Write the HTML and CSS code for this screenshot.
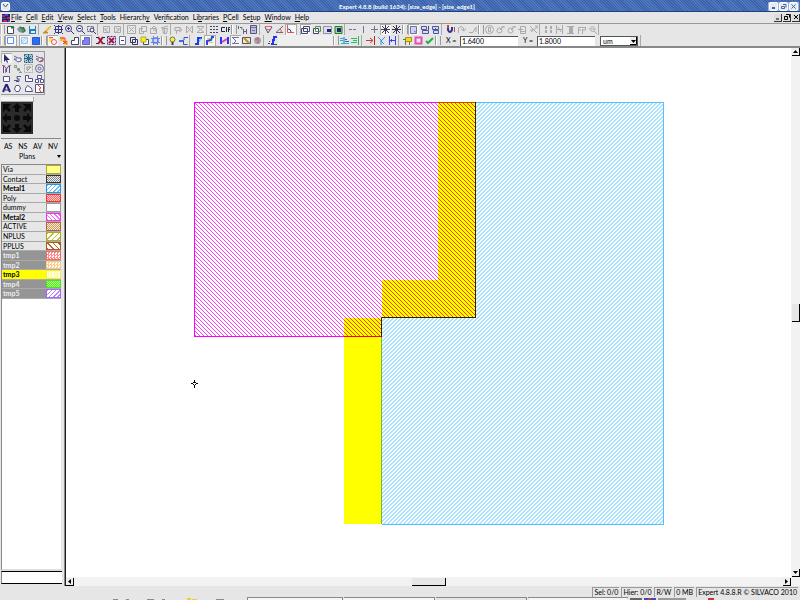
FILE: index.html
```html
<!DOCTYPE html>
<html lang="en">
<head>
<meta charset="utf-8">
<title>Expert 4.8.8</title>
<link rel="stylesheet" href="styles.css">
</head>
<body>
<svg class="defs" aria-hidden="true">
  <symbol id="new" viewBox="0 0 9 9"><path d="M1.5 1.5h4l2 2v5h-6z" fill="#fff" stroke="#334"/><path d="M5 3l2-2 1 2z" fill="#080" stroke="#063"/></symbol>
  <symbol id="open" viewBox="0 0 9 9"><path d="M0 4l3-3 3 2v5l-4-1z" fill="#789"/><path d="M3 2l4 0 2 4-3 2z" fill="#364"/><path d="M4 4l3 2" stroke="#3c3"/></symbol>
  <symbol id="save" viewBox="0 0 9 9"><path d="M1 1h7v8H1z" fill="#17a"/><path d="M2 1h5v3H2zM3 6h4v2H3z" fill="#def"/></symbol>
  <symbol id="pencil" viewBox="0 0 9 9"><path d="M2 7l5-5" stroke="#eb2" stroke-width="2"/><path d="M0 8h5l-2-2zM7 1l1 1" fill="#a84" stroke="#b82"/></symbol>
  <symbol id="fit" viewBox="0 0 9 9"><path d="M1.500 1.500h6v6h-6zM0 4.500h9M4.500 0v9" fill="none" stroke="#227"/><path d="M0 0h1v1H0zM8 0h1v1H8zM0 8h1v1H0zM8 8h1v1H8z" fill="#227"/></symbol>
  <symbol id="zin" viewBox="0 0 9 9"><circle cx="3.500" cy="3.500" r="3" fill="#eef" stroke="#226"/><path d="M6 6l3 3M2 3.500h3M3.500 2v3" stroke="#226"/></symbol>
  <symbol id="zout" viewBox="0 0 9 9"><circle cx="3.500" cy="3.500" r="3" fill="#eef" stroke="#226"/><path d="M6 6l3 3M2 3.500h3" stroke="#226"/></symbol>
  <symbol id="zbox" viewBox="0 0 9 9"><path d="M.5 1.500h6v5h-6z" fill="none" stroke="#557" stroke-dasharray="2 1"/><circle cx="5" cy="5" r="2" fill="#eef" stroke="#226"/><path d="M6 6l3 3" stroke="#226"/></symbol>
  <symbol id="undo" viewBox="0 0 9 9"><path d="M1.500 1.500h6v6h-6zM6 3L3 5l3 2M3 5V3" fill="none" stroke="currentColor"/></symbol>
  <symbol id="redo" viewBox="0 0 9 9"><path d="M1.500 1.500h6v6h-6zM3 3l3 2-3 2M6 5V3" fill="none" stroke="currentColor"/></symbol>
  <symbol id="cut" viewBox="0 0 9 9"><path d="M.5 .5h8v8h-8zM2 2l5 5M7 2L2 7" fill="none" stroke="currentColor"/></symbol>
  <symbol id="copy" viewBox="0 0 9 9"><path d="M3.500 1.500h5v5h-5zM5 3.500H1.500v5h4V6" fill="none" stroke="currentColor"/></symbol>
  <symbol id="paste" viewBox="0 0 9 9"><path d="M1.500 3.500h6v5h-6zM3 3l2-2 2 2M4 5h3v2" fill="none" stroke="currentColor"/></symbol>
  <symbol id="del" viewBox="0 0 9 9"><path d="M2.500 3.500h5l-1 5h-3zM1 3l7-2M4.500 4v4" fill="none" stroke="currentColor"/></symbol>
  <symbol id="rot" viewBox="0 0 9 9"><path d="M1 2.500h5v3H1zM2.500 6v3M6 3l2 2-3 2" fill="none" stroke="currentColor"/></symbol>
  <symbol id="flip" viewBox="0 0 9 9"><path d="M1.500 1v7l3-3.500zM7.500 1v7l-3-3.500z" fill="none" stroke="currentColor"/></symbol>
  <symbol id="hour" viewBox="0 0 9 9"><path d="M1 1.500h7l-3.500 3zM1 7.500h7l-3.500-3z" fill="none" stroke="currentColor"/></symbol>
  <symbol id="dots" viewBox="0 0 9 9"><path d="M0 1.500h9M0 4.500h9M0 7.500h9" stroke="#336" stroke-dasharray="2 1"/></symbol>
  <symbol id="cif" viewBox="0 0 9 9"><path d="M4 2.500H.5v4H4M5.500 2v5M9 2.500H7.500V7M7 4.500h2" fill="none" stroke="#113"/></symbol>
  <symbol id="half" viewBox="0 0 9 9"><path d="M.5 1v3M2 2.500h2v2M5.500 4v5M8.500 4v5M5 6.500h3" fill="none" stroke="#557"/></symbol>
  <symbol id="calc" viewBox="0 0 9 9"><path d="M1.500 .5h6v8h-6z" fill="#bbd" stroke="#447"/><path d="M2 2.500h5M3 5.500h3" stroke="#669"/></symbol>
  <symbol id="ang1" viewBox="0 0 9 9"><path d="M1 2l3 6 4-6" fill="none" stroke="#446"/><path d="M1 1.500h7M3 4.500h3" stroke="#e55"/></symbol>
  <symbol id="ang2" viewBox="0 0 9 9"><path d="M8 1L1 7.500h7" fill="none" stroke="#557"/><path d="M5 4q2 1 1 4" fill="none" stroke="#e33"/></symbol>
  <symbol id="ang3" viewBox="0 0 9 9"><path d="M1.500 0v7.500H8" fill="none" stroke="#d44"/><path d="M2 4q3 0 3 3" fill="none" stroke="#337"/></symbol>
  <symbol id="ov" viewBox="0 0 9 9"><path d="M.5 3.500h6v5h-6zM2.500 1.500h6v5h-6z" fill="none" stroke="currentColor"/></symbol>
  <symbol id="ovg" viewBox="0 0 9 9"><path d="M1.500 3.500h5v5h-5z" fill="#fff" stroke="#336"/><path d="M3.500 1.500h5v5h-5z" fill="none" stroke="#484"/></symbol>
  <symbol id="sqin" viewBox="0 0 9 9"><path d="M.5 1.500h8v7h-8z" fill="#dde" stroke="#88a"/><path d="M4 4h4v3H4z" fill="#116"/></symbol>
  <symbol id="sqg" viewBox="0 0 9 9"><path d="M1 1.500h7v7H1z" fill="#8d8" stroke="#171"/><path d="M3 3h4v4H3z" fill="#116"/></symbol>
  <symbol id="dash" viewBox="0 0 9 9"><path d="M1 4.500h3M5 4.500h3" stroke="#668"/></symbol>
  <symbol id="bar" viewBox="0 0 9 9"><path d="M4.500 1v7" stroke="#668"/></symbol>
  <symbol id="plus" viewBox="0 0 9 9"><path d="M4.500 1v7M1 4.500h7" stroke="#668"/></symbol>
  <symbol id="star" viewBox="0 0 9 9"><path d="M4.500 0v9M0 4.500h9M1 1l7 7M8 1L1 8" stroke="#224"/></symbol>
  <symbol id="win" viewBox="0 0 9 9"><path d="M1.500 1.500h6v7h-6z" fill="#ccf" stroke="#668"/><path d="M1 1.500h5M8 8L5 6" stroke="#66a"/></symbol>
  <symbol id="stack" viewBox="0 0 9 9"><path d="M1.500 1.500h5v3h-5zM2.500 5.500h6v3h-6z" fill="#dde" stroke="#449"/><path d="M8.500 1v4" stroke="#338"/></symbol>
  <symbol id="stack2" viewBox="0 0 9 9"><path d="M1.500 1.500h6v3h-6zM2.500 5.500h5v3h-5z" fill="#cdf" stroke="#449"/><path d="M4 3l4 4" stroke="#258"/></symbol>
  <symbol id="mag" viewBox="0 0 9 9"><path d="M2 1v4q2 4 4 0V2" fill="none" stroke="#228" stroke-width="2"/><path d="M1 0h2v3H1z" fill="#e22"/><path d="M8.500 2v5" stroke="#a44"/></symbol>
  <symbol id="turn" viewBox="0 0 9 9"><path d="M1.500 8V3q3-3 5 0v2M4 4l3 2 2-3" fill="none" stroke="currentColor"/></symbol>
  <symbol id="slope" viewBox="0 0 9 9"><path d="M1 7.500h4M5 7l3-5v5" fill="none" stroke="currentColor"/></symbol>
  <symbol id="ring" viewBox="0 0 9 9"><circle cx="4.500" cy="4.500" r="4" fill="none" stroke="currentColor"/><path d="M3.500 2.500h2v4h-2z" fill="none" stroke="currentColor"/></symbol>
  <symbol id="key" viewBox="0 0 9 9"><circle cx="3.500" cy="5.500" r="2.500" fill="none" stroke="currentColor"/><path d="M4 5l4-4M5 2h4" stroke="currentColor"/></symbol>
  <symbol id="form" viewBox="0 0 9 9"><path d="M2.500 1.500h5v7h-5zM0 4.500h5M3 6.500h4" fill="none" stroke="currentColor"/></symbol>
  <symbol id="scis" viewBox="0 0 9 9"><path d="M1 1l7 7M8 2L2 7M1 5h3M6 1h3v3" fill="none" stroke="currentColor"/></symbol>
  <symbol id="arr" viewBox="0 0 9 9"><path d="M2 1v3M7 1v3M2 5v3M7 5v3" stroke="currentColor" stroke-width="2"/></symbol>
  <symbol id="aln" viewBox="0 0 9 9"><path d="M1.500 0v9M7.500 0v9M2 4.500h5M3 2l3 5" fill="none" stroke="currentColor"/></symbol>
  <symbol id="col" viewBox="0 0 9 9"><path d="M3 2h4v6H3z" fill="currentColor"/><path d="M1 1.500h7M1 8.500h7" stroke="currentColor"/></symbol>
  <symbol id="ff" viewBox="0 0 9 9"><path d="M1.500 9V2.500H5M1 5h3M5.500 9V4M5 2.500h4M8.500 2v3H6" fill="none" stroke="currentColor"/></symbol>
  <symbol id="zg" viewBox="0 0 9 9"><path d="M4.500 1l3 3-3 3-3-3zM6 6l3 3M3 4h3" fill="none" stroke="currentColor"/></symbol>
  <symbol id="bsq" viewBox="0 0 9 9"><path d="M1.500 1.500h6v6h-6z" fill="#fff" stroke="#48f"/></symbol>
  <symbol id="bhat" viewBox="0 0 9 9"><path d="M1.500 1.500h6v6h-6z" fill="#eff6ff" stroke="#9bd"/><path d="M2 5l3-3M2 7l5-5M5 7l2-2" stroke="#8cf"/></symbol>
  <symbol id="bfull" viewBox="0 0 9 9"><path d="M1.500 1.500h7v7h-7z" fill="#16e" stroke="#24c"/></symbol>
  <symbol id="ro" viewBox="0 0 9 9"><path d="M1 1h4v5H1z" fill="#fd4"/><path d="M1 1.500h4" stroke="#e44"/><circle cx="6" cy="6" r="2.500" fill="#fff" stroke="#e44"/></symbol>
  <symbol id="rx" viewBox="0 0 9 9"><path d="M1 1h4v4H1zM5 5h4v4H5z" fill="#fb2"/><path d="M1 2h5v4M4 5l4 3M8 5L4 8" fill="none" stroke="#e22"/></symbol>
  <symbol id="lsh" viewBox="0 0 9 9"><path d="M1.500 8.500v-4h3v-3h4v7z" fill="#fff" stroke="#336"/></symbol>
  <symbol id="lfill" viewBox="0 0 9 9"><path d="M1.500 8.500v-4h2v-3h5v7z" fill="#77e" stroke="#55c"/></symbol>
  <symbol id="xr" viewBox="0 0 9 9"><path d="M2 1l5 7M7 1L2 8" stroke="#a02" stroke-width="2"/><path d="M0 1.500h2M7 1.500h2M0 7.500h2M7 7.500h2M4 4.500h1" stroke="#116"/></symbol>
  <symbol id="xb" viewBox="0 0 9 9"><path d="M.5 .5h8v8h-8z" fill="#dde" stroke="#228" stroke-dasharray="2 1"/><path d="M2 2l5 5M7 2L2 7" stroke="#a02" stroke-width="2"/></symbol>
  <symbol id="page" viewBox="0 0 9 9"><path d="M1.500 .5h6v8h-6z" fill="#fff" stroke="#669"/><path d="M3 4.500h3" stroke="#336"/></symbol>
  <symbol id="dup" viewBox="0 0 9 9"><path d="M1.500 1.500h5v5h-5zM3.500 3.500h5v5h-5z" fill="#eef" stroke="#225"/></symbol>
  <symbol id="ydup" viewBox="0 0 9 9"><path d="M3.500 3.500h5v5h-5z" fill="#fff" stroke="#336"/><path d="M1 1h5v5H1z" fill="#fe0" stroke="#aa2"/></symbol>
  <symbol id="chip" viewBox="0 0 9 9"><path d="M2 2h5v5H2z" fill="#cdf" stroke="#44e"/><path d="M2.500 0v9M6.500 0v9M0 2.500h9M0 6.500h9" stroke="#57e"/></symbol>
  <symbol id="bulb" viewBox="0 0 9 9"><circle cx="4.500" cy="3.500" r="2.500" fill="#fe3" stroke="#664"/><path d="M4.500 6v3" stroke="#333" stroke-width="2"/></symbol>
  <symbol id="link" viewBox="0 0 9 9"><path d="M0 4h5v2H0z" fill="#26e"/><path d="M5 4V1.500h4M4.500 5v3.500h4" fill="none" stroke="#24b"/></symbol>
  <symbol id="zig" viewBox="0 0 9 9"><path d="M1 8h3V2h4" fill="none" stroke="#12e" stroke-width="2"/><path d="M5 6l2-4" stroke="#0cc"/></symbol>
  <symbol id="zigy" viewBox="0 0 9 9"><path d="M2 9V5l4-1 1-3h2" fill="none" stroke="#13d" stroke-width="2"/><path d="M2 2.500h4M4 6.500h4" stroke="#cc3"/></symbol>
  <symbol id="hh" viewBox="0 0 9 9"><path d="M1 1v7M8 1v7" stroke="#12f" stroke-width="2"/><path d="M2 6l5-3" stroke="#e2a" stroke-width="2"/></symbol>
  <symbol id="sum" viewBox="0 0 9 9"><path d="M1 1.500h7M2 2l3 3-3 3M1 7.500h7" fill="none" stroke="#669"/></symbol>
  <symbol id="eye" viewBox="0 0 9 9"><path d="M.5 1.500h8v6h-8z" fill="#eec" stroke="#446"/><path d="M2 2l5 5" stroke="#b80" stroke-width="2"/></symbol>
  <symbol id="bug" viewBox="0 0 9 9"><circle cx="4.500" cy="4.500" r="3.500" fill="#99a"/><path d="M5 1v7M2 3h3" stroke="#c55"/></symbol>
  <symbol id="step" viewBox="0 0 9 9"><path d="M3 8h2V4h1V1h3" fill="none" stroke="#12e" stroke-width="2"/><path d="M0 7.500h2M6 8.500h3M1 5.500h1" stroke="#336"/></symbol>
  <symbol id="cyl" viewBox="0 0 9 9"><path d="M0 2.500h3M0 4.500h3M1 7.500h8" stroke="#0bb"/><path d="M4 1v6M5 5.500h4M5 3.500h2" fill="none" stroke="#25c"/></symbol>
  <symbol id="grn" viewBox="0 0 9 9"><path d="M0 2.500h6M0 6.500h6M2 4.500h4" stroke="#1b5"/><path d="M7.500 0v9" stroke="#2a4"/></symbol>
  <symbol id="rarr" viewBox="0 0 9 9"><path d="M0 4.500h6M4 2l3 2.500L4 7" fill="none" stroke="#c22"/><path d="M8.500 0v9" stroke="#a11"/></symbol>
  <symbol id="kk" viewBox="0 0 9 9"><path d="M1 1l3 3v5M8 1L4 5l3 3" fill="none" stroke="#28e"/></symbol>
  <symbol id="hb" viewBox="0 0 9 9"><path d="M1.500 0v9M7.500 0v9M2 4.500h5M3.500 3v3" stroke="#23e"/></symbol>
  <symbol id="flag" viewBox="0 0 9 9"><path d="M2.500 1.500h6v4h-6z" fill="#ed0" stroke="#a80"/><path d="M2.500 5v4M6.500 6v3M0 3.500h3" stroke="#663"/></symbol>
  <symbol id="psq" viewBox="0 0 9 9"><path d="M1.500 1.500h6v6h-6z" fill="#fdf" stroke="#d4a" stroke-width="2"/></symbol>
  <symbol id="ok" viewBox="0 0 9 9"><path d="M1 5l2 2 5-5" fill="none" stroke="#1a3" stroke-width="2"/></symbol>
  <symbol id="cur" viewBox="0 0 9 9"><path d="M2 0v8l2-2 1 3 1-1-1-2h3z" fill="#116"/></symbol>
  <symbol id="hand" viewBox="0 0 9 9"><path d="M1 2l4 2 3 0v3l-3 1-4-3h3" fill="#eef" stroke="#558"/></symbol>
  <symbol id="mv" viewBox="0 0 9 9"><path d="M.5 .5h8v8h-8z" fill="#9cc" stroke="#246" stroke-dasharray="2 1"/><path d="M4.500 1v7M1 4.500h7M2 2l5 5M7 2L2 7" stroke="#258"/></symbol>
  <symbol id="handr" viewBox="0 0 9 9"><path d="M1 2l4 2 3 0v3l-3 1-4-3h3" fill="#eef" stroke="#558"/><path d="M6 3l2 3-3 1" stroke="#d34" fill="none"/></symbol>
  <symbol id="mm" viewBox="0 0 9 9"><path d="M1.500 9V1l3 4 3-4v8M4.500 5v3" fill="none" stroke="#448"/><path d="M0 1.500h2M7 1.500h2M3.500 5v4" stroke="#c55"/></symbol>
  <symbol id="nodes" viewBox="0 0 9 9"><path d="M1.500 1.500h2v2h-2zM4.500 4.500h2v2h-2zM3 3l5 5M6 8.500h3" fill="none" stroke="#797"/></symbol>
  <symbol id="sel" viewBox="0 0 9 9"><path d="M.5 .5h8v8h-8z" fill="none" stroke="#9a9" stroke-dasharray="2 1"/><path d="M3 6V3h4L3 7" fill="none" stroke="#888"/></symbol>
  <symbol id="tgt" viewBox="0 0 9 9"><circle cx="4.500" cy="4.500" r="4" fill="none" stroke="#558"/><circle cx="4.500" cy="4.500" r="1.500" fill="none" stroke="#558"/></symbol>
  <symbol id="rect" viewBox="0 0 9 9"><path d="M1.500 2.500h6v5h-6z" fill="#fff" stroke="#448"/></symbol>
  <symbol id="wire" viewBox="0 0 9 9"><path d="M1 6.500h4v-2h-1v-2h4M3 7.500h3v-3" fill="none" stroke="#448"/></symbol>
  <symbol id="poly" viewBox="0 0 9 9"><path d="M1.500 1.500h3v3h4v3h-7z" fill="#fff" stroke="#448"/></symbol>
  <symbol id="hier" viewBox="0 0 9 9"><path d="M2.500 1.500h4v3h-4zM.5 5.500h3v3h-3zM5.500 5.500h3v3h-3z" fill="#fff" stroke="#448"/></symbol>
  <symbol id="tri" viewBox="0 0 9 9"><path d="M1 8l3-7h1l3 7" fill="none" stroke="#116" stroke-width="2"/><path d="M3 6h4" stroke="#116"/></symbol>
  <symbol id="circ" viewBox="0 0 9 9"><path d="M3 1.500h3L7.500 4 6 7.500H3L1.500 5z" fill="#fff" stroke="#448"/></symbol>
  <symbol id="arc" viewBox="0 0 9 9"><path d="M1.500 7.500h7q0-4-5-6l-2 3z" fill="#fff" stroke="#448"/></symbol>
  <symbol id="rline" viewBox="0 0 9 9"><path d="M.5 .5h8v8h-8z" fill="#fff" stroke="#446"/><path d="M3 1l3 3-2 1 2 3" fill="none" stroke="#e22"/></symbol>
</svg>

<header class="title"><button class="wm" aria-label="Window menu"><svg width="7" height="6"><path d="M1 1l2.500 3L6 1" fill="none" stroke="#456"/></svg></button><h1>Expert 4.8.8 (build 1634): [size_edge] - [size_edge1]</h1><div class="wmb"><button aria-label="Minimize"><svg width="7" height="7"><path d="M2 5h3" stroke="#46a" stroke-width="2"/></svg></button><button aria-label="Restore"><svg width="7" height="7"><path d="M1.500 3.500h3v2h-3zM3 1.500h3v3" fill="none" stroke="#46a"/></svg></button><button aria-label="Close"><svg width="7" height="7"><path d="M1.500 1.500l4 4M5.500 1.500l-4 4" stroke="#46a"/></svg></button></div></header>

<nav class="menu">
  <svg class="logo" width="8" height="8"><path d="M0 0h8v8H0z" fill="#226"/><path d="M0 1h3v2H0zM5 3h3v2H5zM1 6h4v2H1z" fill="#c24"/><path d="M3 0h3v2H3zM0 4h4v1H0zM6 6h2v2H6z" fill="#35d"/></svg>
  <button><u>F</u>ile</button><button><u>C</u>ell</button><button><u>E</u>dit</button><button><u>V</u>iew</button><button><u>S</u>elect</button><button><u>T</u>ools</button><button>Hierarch<u>y</u></button><button>Ver<u>i</u>fication</button><button>Li<u>b</u>raries</button><button><u>P</u>Cell</button><button>Se<u>t</u>up</button><button><u>W</u>indow</button><button><u>H</u>elp</button>
  <div class="mdi"><button aria-label="Minimize document"><svg width="6" height="6"><path d="M1 5h3" stroke="#000"/></svg></button><button aria-label="Restore document"><svg width="6" height="6"><path d="M.5 2.500h3v3h-3zM2 .5h3.500v3" fill="none" stroke="#000"/></svg></button><button aria-label="Close document"><svg width="6" height="6"><path d="M1 1l4 4M5 1L1 5" stroke="#000"/></svg></button></div>
</nav>

<div class="bars">
<div class="bar">
  <i class="grip first"></i>
  <button aria-label="New"><svg><use href="#new"/></svg></button><button aria-label="Open"><svg><use href="#open"/></svg></button><button aria-label="Save"><svg><use href="#save"/></svg></button>
  <i class="sep wide"></i>
  <button aria-label="Redraw"><svg><use href="#pencil"/></svg></button><button aria-label="Fit"><svg><use href="#fit"/></svg></button><button aria-label="Zoom in"><svg><use href="#zin"/></svg></button><button aria-label="Zoom out"><svg><use href="#zout"/></svg></button><button aria-label="Zoom box"><svg><use href="#zbox"/></svg></button>
  <i class="sep wide"></i>
  <button class="off" aria-label="Undo"><svg><use href="#undo"/></svg></button><button class="off" aria-label="Redo"><svg><use href="#redo"/></svg></button>
  <i class="sep"></i>
  <button class="off" aria-label="Cut"><svg><use href="#cut"/></svg></button><button class="off" aria-label="Copy"><svg><use href="#copy"/></svg></button><button class="off" aria-label="Paste"><svg><use href="#paste"/></svg></button><button class="off" aria-label="Delete"><svg><use href="#del"/></svg></button>
  <i class="sep"></i>
  <button class="off" aria-label="Rotate"><svg><use href="#rot"/></svg></button><button class="off" aria-label="Flip horizontal"><svg><use href="#flip"/></svg></button><button class="off" aria-label="Flip vertical"><svg><use href="#hour"/></svg></button>
  <i class="sep"></i>
  <button aria-label="Grid"><svg><use href="#dots"/></svg></button><button aria-label="CIF"><svg><use href="#cif"/></svg></button>
  <i class="grip"></i>
  <button aria-label="Step"><svg><use href="#half"/></svg></button><button aria-label="Calculator"><svg><use href="#calc"/></svg></button>
  <i class="sep wide"></i>
  <button aria-label="Any angle"><svg><use href="#ang1"/></svg></button><button aria-label="45 degrees"><svg><use href="#ang2"/></svg></button><button class="on" aria-label="90 degrees"><svg><use href="#ang3"/></svg></button>
  <i class="sep wide"></i>
  <button class="on" aria-label="Overlap"><svg><use href="#ov"/></svg></button><button aria-label="Overlap fill"><svg><use href="#ovg"/></svg></button><button aria-label="Inside"><svg><use href="#sqin"/></svg></button><button aria-label="Inside fill"><svg><use href="#sqg"/></svg></button>
  <i class="sep"></i>
  <button aria-label="Horizontal"><svg><use href="#dash"/></svg></button><button aria-label="Vertical"><svg><use href="#bar"/></svg></button><button aria-label="Cross"><svg><use href="#plus"/></svg></button><button class="on" aria-label="Star"><svg><use href="#star"/></svg></button><button aria-label="Star snap"><svg><use href="#star"/></svg></button>
  <i class="grip"></i>
  <button class="on" aria-label="Window"><svg><use href="#win"/></svg></button><button aria-label="Stack"><svg><use href="#stack"/></svg></button><button aria-label="Stack select"><svg><use href="#stack2"/></svg></button>
  <i class="sep wide"></i>
  <button aria-label="Snap"><svg><use href="#mag"/></svg></button><button class="off" aria-label="Turn"><svg><use href="#turn"/></svg></button><button class="off" aria-label="Slope"><svg><use href="#slope"/></svg></button>
  <i class="grip"></i>
  <button class="off" aria-label="Ring"><svg><use href="#ring"/></svg></button><button class="off" aria-label="Key"><svg><use href="#key"/></svg></button><button class="off" aria-label="Key 2"><svg><use href="#key"/></svg></button><button class="off" aria-label="Form"><svg><use href="#form"/></svg></button><button class="off" aria-label="Split"><svg><use href="#scis"/></svg></button>
  <i class="sep wide"></i>
  <button class="off" aria-label="Array"><svg><use href="#arr"/></svg></button><button class="off" aria-label="Align"><svg><use href="#aln"/></svg></button><button class="off" aria-label="Column"><svg><use href="#col"/></svg></button><button class="off" aria-label="Flatten"><svg><use href="#ff"/></svg></button><button class="off" aria-label="Inspect"><svg><use href="#zg"/></svg></button>
  <i class="sep"></i>
</div>
<div class="bar">
  <i class="grip first"></i>
  <button class="on" aria-label="Outline"><svg><use href="#bsq"/></svg></button><i class="sep"></i><button class="on" aria-label="Hatch"><svg><use href="#bhat"/></svg></button><button aria-label="Solid"><svg><use href="#bfull"/></svg></button>
  <i class="grip"></i>
  <button class="on" aria-label="Or"><svg><use href="#ro"/></svg></button><button aria-label="Xor"><svg><use href="#rx"/></svg></button><button aria-label="Shape"><svg><use href="#lsh"/></svg></button><button class="on" aria-label="Filled shape"><svg><use href="#lfill"/></svg></button>
  <i class="sep wide"></i>
  <button aria-label="Deselect"><svg><use href="#xr"/></svg></button><button aria-label="Deselect box"><svg><use href="#xb"/></svg></button><button aria-label="Page"><svg><use href="#page"/></svg></button><button aria-label="Duplicate"><svg><use href="#dup"/></svg></button><button aria-label="Highlight"><svg><use href="#ydup"/></svg></button><button aria-label="Chip"><svg><use href="#chip"/></svg></button>
  <i class="grip"></i>
  <button aria-label="Hint"><svg><use href="#bulb"/></svg></button><button aria-label="Link"><svg><use href="#link"/></svg></button>
  <i class="sep wide"></i>
  <button aria-label="Trace"><svg><use href="#zig"/></svg></button><button class="on" aria-label="Trace net"><svg><use href="#zigy"/></svg></button>
  <i class="sep wide"></i>
  <button aria-label="Nets"><svg><use href="#hh"/></svg></button><button class="on" aria-label="Sum"><svg><use href="#sum"/></svg></button><button aria-label="View nets"><svg><use href="#eye"/></svg></button><button aria-label="Debug"><svg><use href="#bug"/></svg></button>
  <i class="sep wide"></i>
  <button aria-label="Layers"><svg><use href="#step"/></svg></button>
  <i class="blank"></i>
  <i class="grip"></i>
  <button aria-label="Layers left"><svg><use href="#cyl"/></svg></button><button aria-label="Layers right"><svg><use href="#grn"/></svg></button>
  <i class="sep wide"></i>
  <button aria-label="Move to edge"><svg><use href="#rarr"/></svg></button><button aria-label="Split edge"><svg><use href="#kk"/></svg></button><button aria-label="Width"><svg><use href="#hb"/></svg></button>
  <i class="sep wide"></i>
  <button aria-label="Flag"><svg><use href="#flag"/></svg></button><button aria-label="Region"><svg><use href="#psq"/></svg></button><button aria-label="Check"><svg><use href="#ok"/></svg></button>
  <i class="grip"></i>
  <label for="x">X =</label><input id="x" value="1.6400"><label for="y">Y =</label><input id="y" value="1.8000">
  <div class="unit"><select aria-label="Units"><option>um</option></select><svg width="7" height="8"><path d="M0 0h7v8H0z" fill="#eee"/><path d="M0 7.500h6.500V0" fill="none" stroke="#000"/><path d="M1 3h5L3.500 6z"/></svg></div>
  <i class="sep"></i>
</div>
</div>

<main>
  <aside>
    <div class="palette">
      <button class="on" aria-label="Select"><svg><use href="#cur"/></svg></button><button aria-label="Pan"><svg><use href="#hand"/></svg></button><button aria-label="Move"><svg><use href="#mv"/></svg></button><button aria-label="Grab"><svg><use href="#handr"/></svg></button>
      <button aria-label="Measure"><svg><use href="#mm"/></svg></button><button aria-label="Edit nodes"><svg><use href="#nodes"/></svg></button><button aria-label="Select area"><svg><use href="#sel"/></svg></button><button aria-label="Target"><svg><use href="#tgt"/></svg></button>
      <button aria-label="Box"><svg><use href="#rect"/></svg></button><button aria-label="Wire"><svg><use href="#wire"/></svg></button><button aria-label="Polygon"><svg><use href="#poly"/></svg></button><button aria-label="Instance"><svg><use href="#hier"/></svg></button>
      <button aria-label="Text"><svg><use href="#tri"/></svg></button><button aria-label="Circle"><svg><use href="#circ"/></svg></button><button aria-label="Arc"><svg><use href="#arc"/></svg></button><button aria-label="Ruler"><svg><use href="#rline"/></svg></button>
    </div>
    <i class="hgrip"></i>
    <svg class="pad" width="32" height="32" viewBox="0 0 32 32"><path d="M0 0h32v32H0z" fill="#2b2b2b"/><g fill="#0a0a0a"><circle cx="16" cy="16" r="3"/><path id="pa" d="M16 1l5 5h-3v4h-4V6h-3z"/><use href="#pa" transform="rotate(90 16 16)"/><use href="#pa" transform="rotate(180 16 16)"/><use href="#pa" transform="rotate(270 16 16)"/><path id="pb" d="M2 2h8L7 5l3 3-2 2-3-3-3 3z"/><use href="#pb" transform="rotate(90 16 16)"/><use href="#pb" transform="rotate(180 16 16)"/><use href="#pb" transform="rotate(270 16 16)"/></g></svg>
    <div class="modes"><button>AS</button><button>NS</button><button>AV</button><button>NV</button></div>
    <button class="plans"><span>Plans</span><svg width="4" height="3"><path d="M0 0h4L2 3z"/></svg></button>
    <ul class="layers">
      <li><span>Via</span><i class="sw via"></i></li>
      <li><span>Contact</span><i class="sw contact"></i></li>
      <li class="b"><span>Metal1</span><i class="sw metal1"></i></li>
      <li><span>Poly</span><i class="sw poly"></i></li>
      <li><span>dummy</span><i class="sw dummy"></i></li>
      <li class="b"><span>Metal2</span><i class="sw metal2"></i></li>
      <li><span>ACTIVE</span><i class="sw active"></i></li>
      <li><span>NPLUS</span><i class="sw nplus"></i></li>
      <li><span>PPLUS</span><i class="sw pplus"></i></li>
      <li class="tmp"><span>tmp1</span><i class="sw t1"></i></li>
      <li class="tmp"><span>tmp2</span><i class="sw t2"></i></li>
      <li class="cur"><span>tmp3</span><i class="sw t3"></i></li>
      <li class="tmp"><span>tmp4</span><i class="sw t4"></i></li>
      <li class="tmp"><span>tmp5</span><i class="sw t5"></i></li>
    </ul>
    <div class="rest"></div>
    <input class="cmd" aria-label="Layer filter">
  </aside>
  <section class="work">
    <svg class="canvas" role="img" aria-label="Layout" shape-rendering="crispEdges">
      <defs>
        <pattern id="hm" width="4" height="4" patternUnits="userSpaceOnUse"><path d="M0 0h1v1H0zM1 1h1v1H1zM2 2h1v1H2zM3 3h1v1H3z" fill="#ff40ff"/></pattern>
        <pattern id="hr" width="4" height="4" patternUnits="userSpaceOnUse"><path d="M0 0h1v1H0zM1 1h1v1H1zM2 2h1v1H2zM3 3h1v1H3z" fill="#ff4000"/></pattern>
        <pattern id="hc" width="4" height="4" patternUnits="userSpaceOnUse"><path d="M2 0h2v1H2zM1 1h2v1H1zM0 2h2v1H0zM3 3h1v1H3zM0 3h1v1H0z" fill="#a8e2ff"/></pattern>
      </defs>
      <g transform="translate(-66 -48)">
        <path d="M194 102h282v216h-94v19H194z" fill="url(#hm)"/>
        <path d="M476 102h188v422H382V318h94z" fill="url(#hc)"/>
        <path d="M438 102h38v216h-94v206h-38V318h38v-38h56z" fill="#ff0"/>
        <path d="M438 102h38v216h-94v19h-38v-19h38v-38h56z" fill="url(#hr)"/>
        <path d="M438 102.500H194.500v234H344" fill="none" stroke="#f0f"/>
        <path d="M344 336.500h38" stroke="#f00"/>
        <path d="M438 102.500h37" stroke="#c40"/>
        <path d="M476 102.500h187.500v421.500H382" fill="none" stroke="#58c0ff"/>
        <path d="M475.500 102v215.500h-94V337" fill="none" stroke="#222"/>
        <path d="M381.500 337v187" stroke="#6b4"/>
        <path d="M194 380h1v3h-1zM194 385h1v3h-1zM191 383h2v1h-2zM196 383h2v1h-2zM193 382h1v1h-1zM195 382h1v1h-1zM193 384h1v1h-1zM195 384h1v1h-1z"/>
      </g>
    </svg>
    <div class="vs"><button aria-label="Scroll up"><svg width="7" height="7"><path d="M1 5h5L3.500 2z"/></svg></button><span class="thumb"></span><button aria-label="Scroll down"><svg width="7" height="7"><path d="M1 2h5L3.500 5z"/></svg></button></div>
    <div class="hs"><button aria-label="Scroll left"><svg width="7" height="7"><path d="M5 1v5L2 3.500z"/></svg></button><span class="thumb"></span><button aria-label="Scroll right"><svg width="7" height="7"><path d="M2 1v5l3-2.500z"/></svg></button></div>
  </section>
</main>

<footer class="status"><span>Sel: 0/0</span><span>Hier: 0/0</span><span>R/W</span><span>0 MB</span><span>Expert 4.8.8.R © SILVACO 2010</span></footer>
<div class="dock"><svg width="800" height="3"><path d="M247 .5h95M344 .5h90M436 .5h90M528 .5h100M247.500 0v3M342.500 0v3M434.500 0v3M526.500 0v3" stroke="#888"/><path d="M248 1h94v2h-94zM344 1h90v2h-90zM529 1h98v2h-98z" fill="#f6f6f6"/><path d="M113 2h5v1h-5zM126 2h3v1h-3zM147 2h7v1h-7zM162 2h3v1h-3zM216 2h8v1h-8z" fill="#889"/><path d="M187 1h4v2h-4zM192 2h5v1h-5z" fill="#ec3"/><path d="M630 1h12v2h-12z" fill="#666"/><path d="M644 1h12v2h-12z" fill="#44b"/><path d="M648 1h3v2h-3zM708 1h6v2h-6z" fill="#c33"/><path d="M658 1h28v2h-28z" fill="#999"/></svg></div>
</body>
</html>
```

FILE: styles.css
```css
* { box-sizing: border-box; }
html, body { height: 100%; margin: 0; }
body {
  display: flex;
  flex-direction: column;
  overflow: hidden;
  background: #e6e6e6;
  color: #000;
  font: 7px/9px Lato, "Open Sans", sans-serif;
}
button, input, select {
  margin: 0;
  padding: 0;
  border: 0;
  background: none;
  color: inherit;
  font: inherit;
}
svg { display: block; }
.defs { position: absolute; width: 0; height: 0; }

.title {
  display: flex;
  align-items: center;
  height: 12px;
  padding: 1px 1px 0;
  border-bottom: 1px solid #224080;
  background: repeating-linear-gradient(45deg, #3c62ac 0 1px, #5078bc 1px 2px);
  color: #fff;
}
.title h1 { flex: 1; margin: 0; padding-left: 36px; text-align: center; font-size: 6px; line-height: 9px; }
.title button { display: grid; place-items: center; width: 9px; height: 9px; border: 1px solid #fff; border-radius: 2px; background: #e4eaf4; }
.title .wmb { display: flex; gap: 1px; padding: 0 1px; background: #9ab0d8; }

.menu { display: flex; align-items: center; gap: 4px; height: 12px; padding-left: 2px; border-bottom: 1px solid #999; }
.menu .logo { margin-right: -3px; }
.mdi { display: flex; gap: 1px; margin-left: auto; }
.mdi button { display: grid; place-items: center; width: 8px; height: 8px; border-right: 1px solid #333; border-bottom: 1px solid #333; background: #ddd; }

.bars { border-bottom: 2px solid #888; }
.bar { display: flex; align-items: center; height: 11px; }
.bar > button, .palette button { display: grid; place-items: center; flex: none; width: 11px; height: 11px; color: #336; }
.bar > button svg, .palette button svg { width: 9px; height: 9px; opacity: .9; }
.bar > .off { color: #a4a4a4; }
.bar > .on, .palette .on { background: #f6f6f6; box-shadow: inset 1px 1px #aaa; }
.sep { flex: none; width: 3px; height: 11px; border-left: 1px solid #aaa; }
.sep.wide { width: 4px; }
.grip { flex: none; width: 6px; height: 9px; border: solid #999; border-width: 0 1px; box-shadow: inset 1px 0 #fff; background: #e6e6e6; }
.grip.first { width: 5px; border-left-color: #bbb; }
.blank { flex: none; width: 55px; height: 11px; background: #efefef; }
.bar label { width: 19px; padding-left: 5px; white-space: nowrap; }
.bar > input { width: 58px; height: 10px; padding-left: 1px; background: #fff; border-top: 1px solid #555; border-left: 1px solid #555; }
.unit { display: flex; align-items: center; width: 38px; height: 10px; margin: 0 2px 0 5px; background: #fff; border: 1px solid #555; }
.unit select { flex: 1; min-width: 0; height: 8px; padding-left: 2px; line-height: 8px; appearance: none; }

main { display: flex; flex: 1; min-height: 0; }
aside { display: flex; flex-direction: column; width: 65px; padding: 3px 0 2px 1px; border-right: 1px solid #888; }
.palette { display: grid; grid-template-columns: repeat(4, 11px); grid-auto-rows: 10px; width: 44px; padding: 1px 0; border: solid #999; border-width: 1px 1px 1px 0; }
.palette button { height: 10px; }
.hgrip { width: 33px; height: 5px; margin-top: 2px; border: solid #aaa; border-width: 0 1px 1px 0; background: #f4f4f4; }
.modes { display: flex; justify-content: space-around; margin: 4px 3px 0 0; padding-top: 3px; border-top: 1px solid #888; }
.plans { display: flex; align-items: center; justify-content: space-between; height: 13px; margin: 0 3px 0 0; padding: 0 0 2px 18px; }
.layers { display: grid; grid-auto-rows: minmax(0, 1fr); height: 135px; margin: 0 3px 0 0; padding: 0; list-style: none; border-top: 1px solid #888; border-left: 1px solid #888; }
.layers li { display: flex; min-height: 0; background: #e6e6e6; border-bottom: 1px solid #aaa; }
.layers li span { flex: 1; padding-left: 1px; line-height: 9px; }
.layers .b, .layers .cur, .layers .tmp { font-weight: 700; }
.layers .tmp { background: #959595; color: #eee; }
.layers .cur { background: #ff0; }
.sw { width: 15px; border: 1px solid; background-color: #fff; }
.via { color: #aa3; background-color: #ff8; }
.contact { color: #333; background-image: repeating-conic-gradient(#888 0 25%, #eee 0 50%); background-size: 2px 2px; }
.metal1 { color: #29d; background-image: repeating-linear-gradient(135deg, #6bf 0 1px, #fff 1px 3px); }
.poly { color: #e33; background-image: repeating-conic-gradient(#f66 0 25%, #fcc 0 50%); background-size: 2px 2px; }
.dummy { color: #999; }
.metal2 { color: #e3e; background-image: repeating-linear-gradient(45deg, #f6f 0 1px, #fff 1px 3px); }
.active { color: #a63; background-image: repeating-conic-gradient(#c96 0 25%, #fec 0 50%); background-size: 2px 2px; }
.nplus { color: #aa2; background-image: repeating-linear-gradient(135deg, #bb3 0 1px, #fff 1px 4px); }
.pplus { color: #a52; background-image: repeating-linear-gradient(45deg, #b63 0 1px, #fff 1px 4px); }
.t1 { color: #f66; background-image: repeating-conic-gradient(#f88 0 25%, #fff 0 50%); background-size: 3px 3px; }
.t2 { color: #fc7; background-image: repeating-conic-gradient(#fc8 0 25%, #fff 0 50%); background-size: 3px 3px; }
.t3 { color: #ee4; background-image: repeating-conic-gradient(#ff8 0 25%, #fff 0 50%); background-size: 3px 3px; }
.t4 { color: #5d2; background-image: repeating-conic-gradient(#5e2 0 25%, #af8 0 50%); background-size: 2px 2px; }
.t5 { color: #a6e; background-image: repeating-linear-gradient(135deg, #b8f 0 1px, #fff 1px 3px); }
.rest { flex: 1; margin-right: 3px; background: #fff; border-left: 1px solid #888; border-bottom: 2px solid #ddd; }
.cmd { width: 61px; height: 13px; background: #fff; border-top: 1px solid #000; border-bottom: 1px solid #000; border-left: 1px solid #888; }

.work { display: grid; grid-template: 1fr 9px / 1fr 9px; flex: 1; min-width: 0; border-left: 1px solid #222; background: #f2f2f2; }
.canvas { width: 100%; height: 100%; background: #fff; }
.vs, .hs { display: flex; align-items: center; justify-content: space-between; }
.vs { flex-direction: column; }
.vs button, .hs button { display: grid; place-items: center; width: 8px; height: 8px; border-right: 1px solid #000; border-bottom: 1px solid #000; background: #eee; }
.thumb { background: #e6e6e6; border-right: 1px solid #000; border-bottom: 1px solid #000; }
.vs .thumb { width: 8px; height: 18px; }
.hs .thumb { width: 34px; height: 8px; }

.status { display: flex; justify-content: flex-end; gap: 2px; height: 11px; padding: 1px 2px 0 0; }
.status span { padding: 0 1px; border-top: 1px solid #999; border-left: 1px solid #999; line-height: 9px; white-space: nowrap; }
.dock { height: 3px; overflow: hidden; }
```
